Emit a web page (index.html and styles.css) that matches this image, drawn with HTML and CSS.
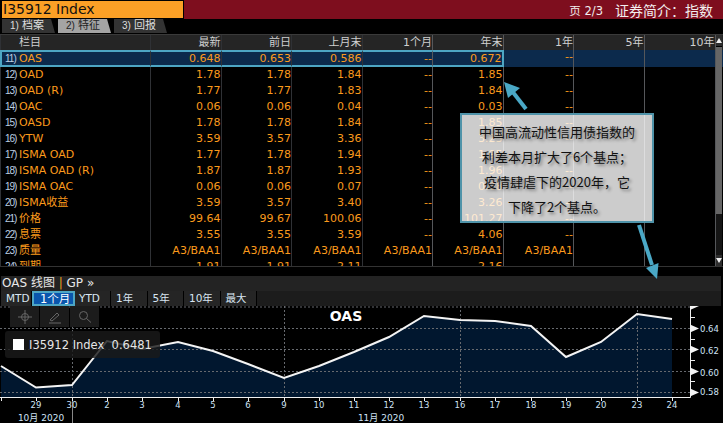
FILE: index.html
```html
<!DOCTYPE html>
<html lang="zh">
<head>
<meta charset="utf-8">
<title>I35912 Index</title>
<link rel="stylesheet" href="styles.css">
</head>
<body>
<div class="page">
  <header class="topbar">
    <div class="ticker">I35912 Index</div>
    <div class="topinfo"><span class="pg">页 2/3</span><span class="ttl">证券简介：指数</span></div>
  </header>
  <nav class="tabs">
    <div class="tab"><i>1)</i>档案</div>
    <div class="tab on"><i>2)</i>特征</div>
    <div class="tab"><i>3)</i>回报</div>
  </nav>
  <section class="tablewrap">
    <div class="row head"><div class="c name"><span class="num"></span>栏目</div><div class="c">最新</div><div class="c">前日</div><div class="c">上月末</div><div class="c">1个月</div><div class="c">年末</div><div class="c">1年</div><div class="c">5年</div><div class="c">10年</div></div>
    <div class="row sel"><div class="c name"><span class="num">11)</span>OAS</div><div class="c">0.648</div><div class="c">0.653</div><div class="c">0.586</div><div class="c">--</div><div class="c">0.672</div><div class="c">--</div><div class="c"></div><div class="c"></div></div>
    <div class="row"><div class="c name"><span class="num">12)</span>OAD</div><div class="c">1.78</div><div class="c">1.78</div><div class="c">1.84</div><div class="c">--</div><div class="c">1.85</div><div class="c">--</div><div class="c"></div><div class="c"></div></div>
    <div class="row"><div class="c name"><span class="num">13)</span>OAD (R)</div><div class="c">1.77</div><div class="c">1.77</div><div class="c">1.83</div><div class="c">--</div><div class="c">1.84</div><div class="c">--</div><div class="c"></div><div class="c"></div></div>
    <div class="row"><div class="c name"><span class="num">14)</span>OAC</div><div class="c">0.06</div><div class="c">0.06</div><div class="c">0.04</div><div class="c">--</div><div class="c">0.03</div><div class="c">--</div><div class="c"></div><div class="c"></div></div>
    <div class="row"><div class="c name"><span class="num">15)</span>OASD</div><div class="c">1.78</div><div class="c">1.78</div><div class="c">1.84</div><div class="c">--</div><div class="c">1.85</div><div class="c">--</div><div class="c"></div><div class="c"></div></div>
    <div class="row"><div class="c name"><span class="num">16)</span>YTW</div><div class="c">3.59</div><div class="c">3.57</div><div class="c">3.36</div><div class="c">--</div><div class="c">3.23</div><div class="c">--</div><div class="c"></div><div class="c"></div></div>
    <div class="row"><div class="c name"><span class="num">17)</span>ISMA OAD</div><div class="c">1.77</div><div class="c">1.78</div><div class="c">1.94</div><div class="c">--</div><div class="c">1.95</div><div class="c">--</div><div class="c"></div><div class="c"></div></div>
    <div class="row"><div class="c name"><span class="num">18)</span>ISMA OAD (R)</div><div class="c">1.87</div><div class="c">1.87</div><div class="c">1.93</div><div class="c">--</div><div class="c">1.96</div><div class="c">--</div><div class="c"></div><div class="c"></div></div>
    <div class="row"><div class="c name"><span class="num">19)</span>ISMA OAC</div><div class="c">0.06</div><div class="c">0.06</div><div class="c">0.07</div><div class="c">--</div><div class="c">0.08</div><div class="c">--</div><div class="c"></div><div class="c"></div></div>
    <div class="row"><div class="c name"><span class="num">20)</span>ISMA收益</div><div class="c">3.59</div><div class="c">3.57</div><div class="c">3.40</div><div class="c">--</div><div class="c">3.26</div><div class="c">--</div><div class="c"></div><div class="c"></div></div>
    <div class="row"><div class="c name"><span class="num">21)</span>价格</div><div class="c">99.64</div><div class="c">99.67</div><div class="c">100.06</div><div class="c">--</div><div class="c">101.27</div><div class="c">--</div><div class="c"></div><div class="c"></div></div>
    <div class="row"><div class="c name"><span class="num">22)</span>息票</div><div class="c">3.55</div><div class="c">3.55</div><div class="c">3.59</div><div class="c">--</div><div class="c">4.06</div><div class="c">--</div><div class="c"></div><div class="c"></div></div>
    <div class="row"><div class="c name"><span class="num">23)</span>质量</div><div class="c">A3/BAA1</div><div class="c">A3/BAA1</div><div class="c">A3/BAA1</div><div class="c">A3/BAA1</div><div class="c">A3/BAA1</div><div class="c">A3/BAA1</div><div class="c"></div><div class="c"></div></div>
    <div class="row"><div class="c name"><span class="num">24)</span>到期</div><div class="c">1.91</div><div class="c">1.91</div><div class="c">2.11</div><div class="c">--</div><div class="c">2.16</div><div class="c">--</div><div class="c"></div><div class="c"></div></div>
    <div class="scroll"><span class="up"></span><span class="thumb"></span><span class="rest"></span><span class="down"></span></div>
  </section>
  <section class="charthead">
    <div class="ctitle">OAS 线图 <b>|</b> GP »</div>
    <div class="ranges">
      <span class="rg">MTD</span><span class="rg cur">1个月</span><span class="rg">YTD</span><span class="rg">1年</span><span class="rg">5年</span><span class="rg">10年</span><span class="rg">最大</span>
    </div>
  </section>
  <section class="chart">
    <svg class="plot" width="723" height="117" viewBox="0 306 723 117" xmlns="http://www.w3.org/2000/svg">
      <polygon class="area" points="1,366 36,387.5 72,385 107,341 142,349 178,342 213,351 248,364 284,378 319,366 354,352 389,337 424,316 460,320 495,321 531,326 566,357 601,342 637,314 672,319 672,397 1,397"/>
      <g class="grid">
        <line x1="0" x2="690" y1="307" y2="307"/><line x1="0" x2="690" y1="328.5" y2="328.5"/><line x1="0" x2="690" y1="349.5" y2="349.5"/><line x1="0" x2="690" y1="371.5" y2="371.5"/><line x1="0" x2="690" y1="392.5" y2="392.5"/>
        <line y1="306" y2="397" x1="72.5" x2="72.5"/><line y1="306" y2="397" x1="284.5" x2="284.5"/><line y1="306" y2="397" x1="460.5" x2="460.5"/><line y1="306" y2="397" x1="637.5" x2="637.5"/>
      </g>
      <polyline class="line" points="1,366 36,387.5 72,385 107,341 142,349 178,342 213,351 248,364 284,378 319,366 354,352 389,337 424,316 460,320 495,321 531,326 566,357 601,342 637,314 672,319"/>
      <path class="axis" d="M0 397.5H690.5V306M1.5 397V401M36.5 397V401M72.5 397V401M107.5 397V401M142.5 397V401M178.5 397V401M213.5 397V401M248.5 397V401M284.5 397V401M319.5 397V401M354.5 397V401M389.5 397V401M424.5 397V401M460.5 397V401M495.5 397V401M531.5 397V401M566.5 397V401M601.5 397V401M637.5 397V401M672.5 397V401M690 317.5H695M690 339.5H695M690 360.5H695M690 381.5H695"/>
      <path class="divider" d="M72.5 401V423"/>
      <g class="marks">
        <polygon points="690,306 699,306 690,310"/><polygon points="690,324.500 699,328.500 690,332.500"/><polygon points="690,345.500 699,349.500 690,353.500"/><polygon points="690,367.500 699,371.500 690,375.500"/><polygon points="690,388.500 699,392.500 690,396.500"/>
      </g>
      <g class="ylab"><text x="700" y="332">0.64</text><text x="700" y="353.500">0.62</text><text x="700" y="375.500">0.60</text><text x="700" y="394.500">0.58</text></g>
      <g class="xlab">
        <text x="36" y="408">29</text><text x="72" y="408">30</text><text x="107" y="408">2</text><text x="142" y="408">3</text><text x="178" y="408">4</text><text x="213" y="408">5</text><text x="248" y="408">6</text><text x="284" y="408">9</text><text x="319" y="408">10</text><text x="354" y="408">11</text><text x="389" y="408">12</text><text x="424" y="408">13</text><text x="460" y="408">16</text><text x="495" y="408">17</text><text x="531" y="408">18</text><text x="566" y="408">19</text><text x="601" y="408">20</text><text x="637" y="408">23</text><text x="672" y="408">24</text>
      </g>
      <text class="mlab" x="41" y="421">10月 2020</text>
      <text class="mlab" x="381" y="421">11月 2020</text>
      <text class="ptitle" x="346" y="321">OAS</text>
    </svg>
    <div class="tools">
      <span class="tool"><svg width="14" height="14" viewBox="0 0 14 14"><circle cx="7" cy="7" r="3.500"/><path d="M7 0V14M0 7H14"/></svg></span>
      <span class="tool"><svg width="14" height="14" viewBox="0 0 14 14"><path d="M2 10L9 3L11 5L4 11ZM1 13H13"/></svg></span>
      <span class="tool"><svg width="14" height="14" viewBox="0 0 14 14"><circle cx="5.500" cy="5.500" r="4"/><path d="M8.500 8.500L13 12.500"/></svg></span>
    </div>
    <div class="legend"><span class="swatch"></span>I35912 Index  0.6481</div>
  </section>
  <aside class="note">
    <p>中国高流动性信用债指数的</p>
    <p>利差本月扩大了6个基点；</p>
    <p>疫情肆虐下的2020年，它</p>
    <p>下降了2个基点。</p>
  </aside>
  <svg class="arrows" width="723" height="423" viewBox="0 0 723 423" xmlns="http://www.w3.org/2000/svg">
    <path d="M526 109L512 91"/><polygon points="504,82 520,88 508,98"/>
    <path d="M639 225L652 265"/><polygon points="646,268 658.500,263 657,279"/>
  </svg>
</div>
</body>
</html>
```
FILE: styles.css
```css
* { box-sizing: border-box; }
html, body { margin: 0; padding: 0; background: #000; }
.page {
  position: relative;
  width: 723px;
  height: 423px;
  overflow: hidden;
  background: #000;
  font-family: "DejaVu Sans", "Noto Sans CJK SC", sans-serif;
  font-size: 11px;
}
.topbar { display: flex; height: 19px; background: #7e0e1e; }
.ticker {
  width: 184px;
  height: 18px;
  margin: 1px 0 0 0;
  border-left: 2px solid #000;
  border-right: 1px solid #000;
  border-bottom: 1px solid #000;
  background: #fba026;
  color: #111;
  font-family: "DejaVu Sans", sans-serif;
  font-size: 14px;
  line-height: 17px;
  box-shadow: 0 -1px 0 #000;
  padding-left: 1px;
}
.topinfo { flex: 1; display: flex; justify-content: flex-end; align-items: center; gap: 12px; padding-right: 10px; color: #f2eeee; }
.pg { font-size: 11.500px; }
.ttl { font-size: 14px; }
.tabs { display: flex; height: 15px; padding: 0 0 0 2px; gap: 3px; }
.tab {
  width: 53px;
  height: 14px;
  background: #333;
  color: #ddd;
  font-size: 11px;
  line-height: 14px;
  padding-left: 8px;
  clip-path: polygon(0 0, 49px 0, 100% 100%, 0 100%);
}
.tab.on { background: #a4a4a4; color: #222; }
.tab i { font-family: "Liberation Sans", sans-serif; font-style: normal; font-size: 10px; margin-right: 3px; color: inherit; }
.tablewrap { position: relative; height: 233px; overflow: hidden; border-bottom: 1px solid #333; }
.row {
  display: grid;
  grid-template-columns: 151px 70.500px 70.500px 70.500px 70.500px 70.500px 70.500px 70.500px 71px;
  height: 16px;
  line-height: 16px;
  color: #fb9a1c;
  font-size: 11px;
}
.c { text-align: right; padding-right: 0; border-right: 1px solid #2f3135; white-space: nowrap; overflow: hidden; }
.c:nth-child(n+5) { border-right-color: #55575a; }
.row .name { text-align: left; display: flex; padding-left: 4px; border-left: 1px solid #2f3135; }
.num { width: 14px; color: #bcd0e4; font-family: "Liberation Sans", sans-serif; font-size: 10px; letter-spacing: -1px; flex: none; }
.head { background: #252525; color: #cfcfcf; border-top: 1px solid #3a3a3a; height: 17px; }
.sel { background: #0c2a4c; height: 17px; margin-top: -1px; line-height: 13px; }
.sel .c:nth-child(-n+6) { border-top: 2px solid #4da6c4; border-bottom: 2px solid #4da6c4; }
.sel .c:nth-child(6) { border-right: 2px solid #4da6c4; }
.sel .name { border-left: 2px solid #4da6c4; padding-left: 3px; }
.scroll { position: absolute; right: 1px; top: 1px; width: 6px; height: 231px; background: #000; display: flex; flex-direction: column; }
.up, .down { height: 11px; background: #2e2e2e; display: flex; align-items: center; justify-content: center; }
.up::before { content: ""; border: 3px solid transparent; border-top-width: 0; border-bottom: 5px solid #eee; }
.down::before { content: ""; border: 3px solid transparent; border-bottom-width: 0; border-top: 5px solid #eee; }
.thumb { height: 167px; background: #666; margin-top: 1px; }
.rest { flex: 1; background: #151515; }
.charthead { margin-top: 9px; height: 30px; background: #202020; margin-left: 1px; margin-right: 2px; }
.ctitle { height: 15px; color: #e8e8e8; font-size: 12px; line-height: 15px; padding-left: 1px; background: #232323; }
.ctitle b { color: #e8a020; font-weight: 400; }
.ranges { display: flex; height: 15px; background: #1c1c1c; width: 100%; }
.rg { width: 36.500px; color: #d8e6f2; font-size: 10.500px; line-height: 14px; padding-left: 5px; border-right: 1px solid #000; background: #252525; white-space: nowrap; }
.rg:first-child { width: 31px; }
.rg.cur { width: 43px; background: #0a56ad; color: #fff; border: 2px solid #4da6c4; line-height: 12px; font-size: 11.500px; padding-left: 6px; }
.rg.cur + .rg { width: 36px; padding-left: 4px; }
.chart { position: relative; height: 117px; }
.plot { display: block; }
.area { fill: #01172f; }
.grid line { stroke: #66696e; stroke-width: 1; stroke-dasharray: 2 2; fill: none; }
.line { fill: none; stroke: #f4f4f4; stroke-width: 2; }
.axis { fill: none; stroke: #eee; stroke-width: 1; }
.divider { fill: none; stroke: #888; stroke-width: 1; }
.marks polygon { fill: #f4f4f4; }
.ylab text { fill: #cfe2f5; font-family: "DejaVu Sans", sans-serif; font-size: 8.500px; }
.xlab text { fill: #cfe2f5; font-family: "DejaVu Sans", sans-serif; font-size: 8.500px; text-anchor: middle; }
.mlab { fill: #cfe2f5; font-family: "DejaVu Sans", "Noto Sans CJK SC", sans-serif; font-size: 9px; text-anchor: middle; }
.ptitle { fill: #fff; font-family: "DejaVu Sans", sans-serif; font-size: 14px; font-weight: 700; text-anchor: middle; }
.tools { position: absolute; left: 10px; top: 0; display: flex; gap: 1px; }
.tool { width: 29px; height: 21px; background: #1c1c1c; display: flex; align-items: center; justify-content: center; }
.tool svg { fill: none; stroke: #666; stroke-width: 1; }
.legend {
  position: absolute;
  left: 5px;
  top: 25px;
  width: 155px;
  height: 27px;
  background: rgba(26, 26, 26, 0.82);
  border-radius: 3px;
  color: #e6e6e6;
  font-size: 11.500px;
  padding-left: 8px;
  display: flex;
  align-items: center;
  white-space: pre;
}
.swatch { width: 11px; height: 11px; background: #fff; margin-right: 5px; flex: none; }
.note {
  position: absolute;
  left: 460px;
  top: 113px;
  width: 194px;
  height: 110px;
  border: 2px solid #4f93a9;
  background: rgba(255, 255, 255, 0.8);
  color: #111;
  font-family: "Noto Sans CJK SC", sans-serif;
  font-size: 13px;
  text-align: center;
  text-shadow: 2px 2px 3px rgba(0, 0, 0, 0.45);
  padding-top: 4px;
}
.note p { margin: 0; height: 25px; line-height: 25px; }
.arrows { position: absolute; left: 0; top: 0; pointer-events: none; }
.arrows path { stroke: #4aa8c6; stroke-width: 4; fill: none; }
.arrows polygon { fill: #4aa8c6; }
```
